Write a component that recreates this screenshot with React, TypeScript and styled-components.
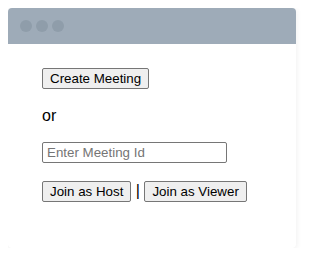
import React from "react";
import styled, { createGlobalStyle } from "styled-components";

const Global = createGlobalStyle`
  body {
    margin: 8px;
    background: #ffffff;
    font-family: "Liberation Sans", Arial, sans-serif;
  }
`;

const Card = styled.div`
  width: 288px;
  min-height: 240px;
  border-radius: 4px;
  background: #ffffff;
  box-shadow: 0 1px 6px rgba(0, 0, 0, 0.08);
  overflow: hidden;
  display: flex;
  flex-direction: column;
`;

const TitleBar = styled.div`
  height: 36px;
  background: #9eabb8;
  display: flex;
  align-items: center;
  gap: 4px;
  padding-left: 12px;
`;

const Dot = styled.span`
  width: 12px;
  height: 12px;
  border-radius: 50%;
  background: #8f9daa;
`;

const Body = styled.div`
  padding: 24px 34px;
  display: flex;
  flex-direction: column;
  align-items: flex-start;
`;

const Button = styled.button`
  font-family: "Liberation Sans", Arial, sans-serif;
  font-size: 13.333px;
  line-height: normal;
  color: #000;
  background: #efefef;
  border: 1px solid #767676;
  border-radius: 2px;
  padding: 1px 7px;
  height: 21px;
  box-sizing: border-box;
  margin: 0;
  vertical-align: baseline;
`;

const Or = styled.p`
  margin: 18px 0 17px;
  font-size: 16px;
  line-height: 18px;
  color: #000;
`;

const Input = styled.input`
  font-family: "Liberation Sans", Arial, sans-serif;
  font-size: 13.333px;
  width: 185px;
  height: 21px;
  box-sizing: border-box;
  padding: 1px 4px;
  border: 1px solid #767676;
  border-radius: 2px;
  margin: 0;
  &::placeholder {
    color: #757575;
  }
`;

const Row = styled.div`
  margin-top: 18px;
  font-size: 16px;
  color: #000;
  white-space: nowrap;
`;

export default function App() {
  return (
    <>
      <Global />
      <Card>
        <TitleBar>
          <Dot />
          <Dot />
          <Dot />
        </TitleBar>
        <Body>
          <Button>Create Meeting</Button>
          <Or>or</Or>
          <Input placeholder="Enter Meeting Id" />
          <Row>
            <Button>Join as Host</Button> | <Button>Join as Viewer</Button>
          </Row>
        </Body>
      </Card>
    </>
  );
}
